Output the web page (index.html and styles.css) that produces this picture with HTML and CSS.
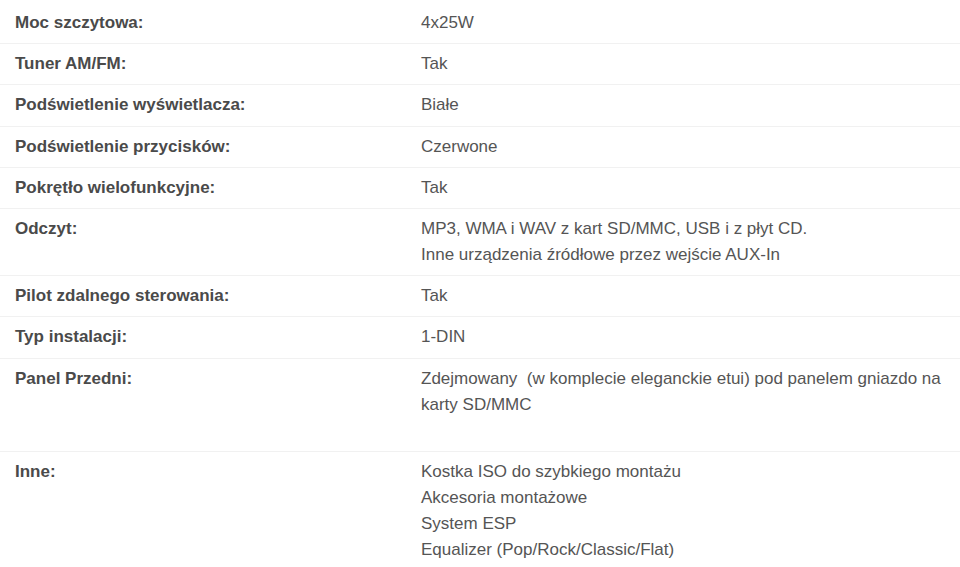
FILE: index.html
```html
<!DOCTYPE html>
<html lang="pl">
<head>
<meta charset="utf-8">
<title>Specyfikacja</title>
<link rel="stylesheet" href="styles.css">
</head>
<body>
<div class="specs">
  <div class="row"><div class="label">Moc szczytowa:</div><div class="value">4x25W</div></div>
  <div class="row"><div class="label">Tuner AM/FM:</div><div class="value">Tak</div></div>
  <div class="row"><div class="label">Podświetlenie wyświetlacza:</div><div class="value">Białe</div></div>
  <div class="row"><div class="label">Podświetlenie przycisków:</div><div class="value">Czerwone</div></div>
  <div class="row"><div class="label">Pokrętło wielofunkcyjne:</div><div class="value">Tak</div></div>
  <div class="row"><div class="label">Odczyt:</div><div class="value">MP3, WMA i WAV z kart SD/MMC, USB i z płyt CD.<br>Inne urządzenia źródłowe przez wejście AUX-In</div></div>
  <div class="row"><div class="label">Pilot zdalnego sterowania:</div><div class="value">Tak</div></div>
  <div class="row"><div class="label">Typ instalacji:</div><div class="value">1-DIN</div></div>
  <div class="row"><div class="label">Panel Przedni:</div><div class="value">Zdejmowany&nbsp; (w komplecie eleganckie etui) pod panelem gniazdo na karty SD/MMC<br><br></div></div>
  <div class="row"><div class="label">Inne:</div><div class="value">Kostka ISO do szybkiego montażu<br>Akcesoria montażowe<br>System ESP<br>Equalizer (Pop/Rock/Classic/Flat)</div></div>
</div>
</body>
</html>
```

FILE: styles.css
```css
html, body {
  margin: 0;
  padding: 0;
  background: #ffffff;
}
body {
  font-family: "Liberation Sans", Arial, sans-serif;
  font-size: 17px;
  line-height: 26px;
  color: #555555;
}
.specs {
  padding-top: 3px;
}
.row {
  display: grid;
  grid-template-columns: 406px 1fr;
  border-bottom: 1px solid #f1f1f1;
}
.label, .value {
  padding: 7px 15px 7.2px 15px;
}
.label {
  font-weight: bold;
  color: #4a4a4a;
}
.value {
  color: #555555;
  padding-right: 14px;
}
```
